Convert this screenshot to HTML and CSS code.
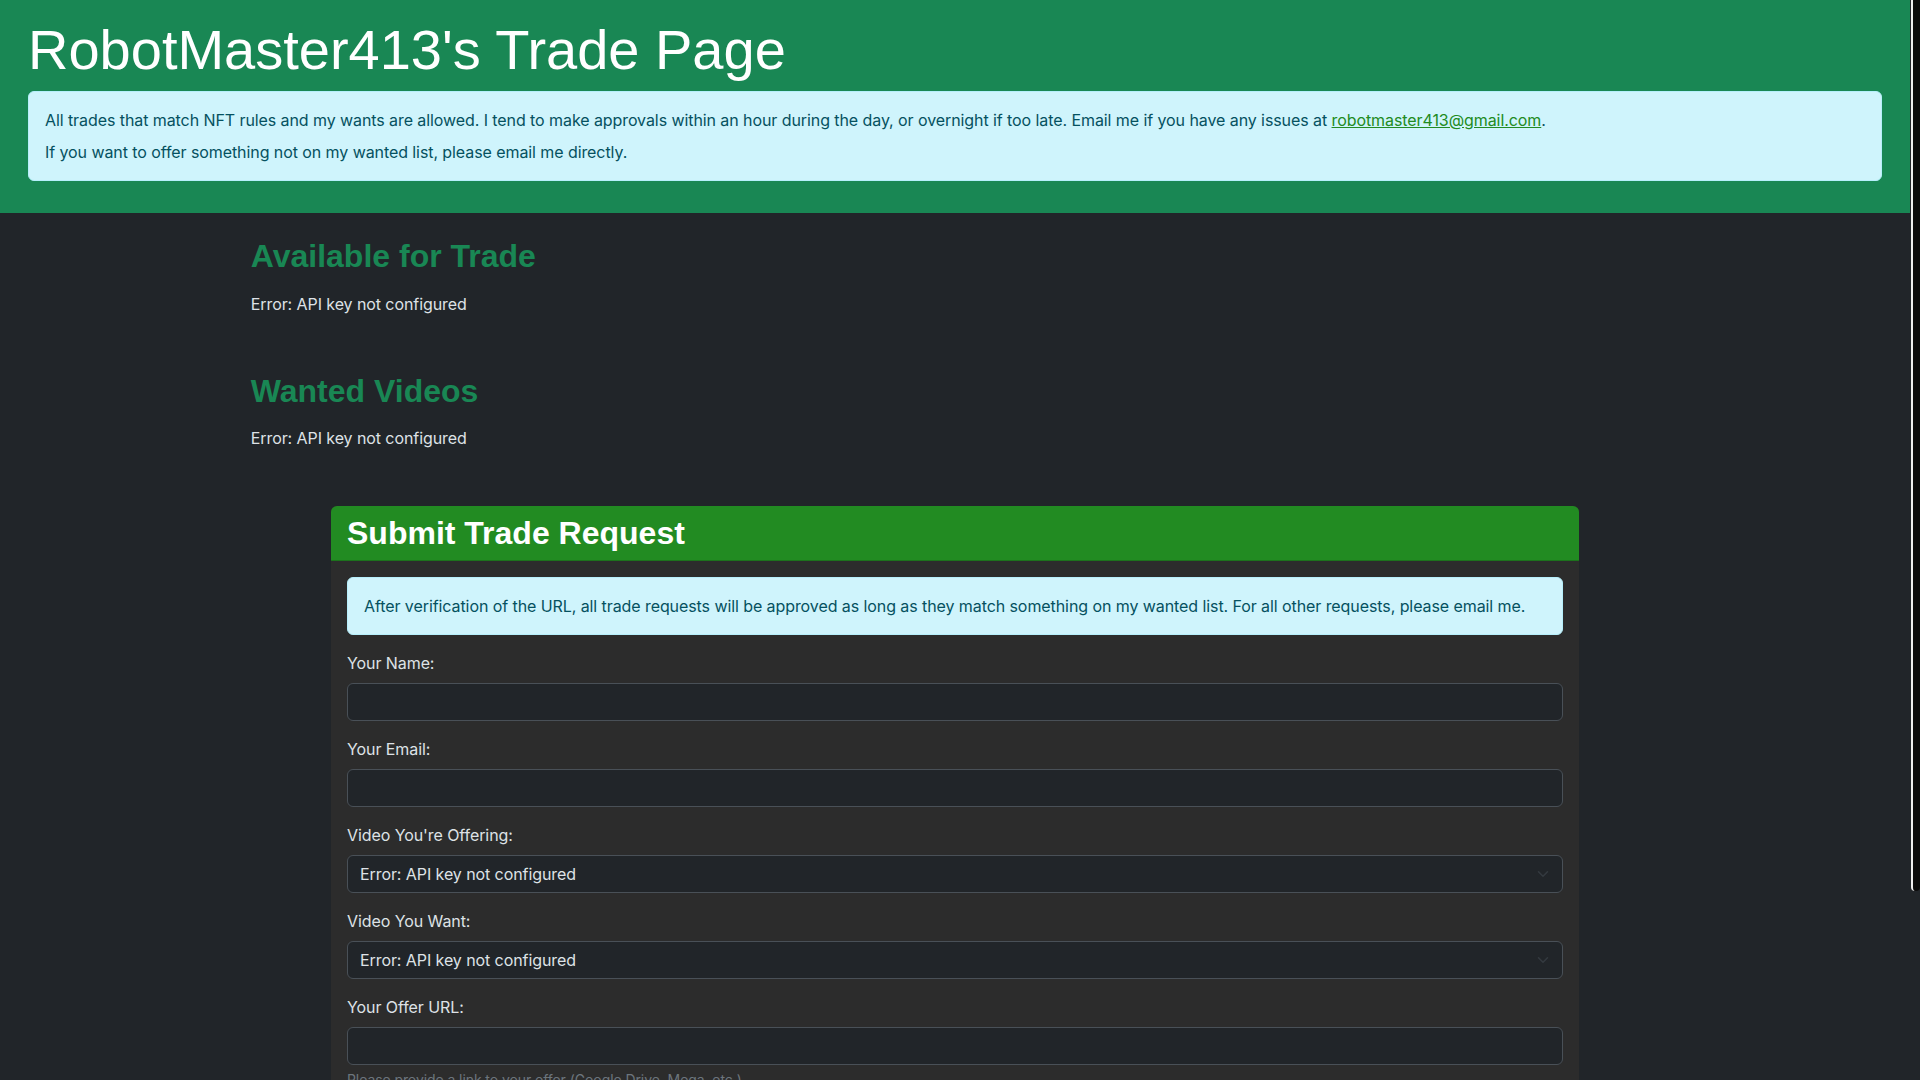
FILE: index.html
```html
<!DOCTYPE html>
<html lang="en">
<head>
<meta charset="utf-8">
<title>RobotMaster413's Trade Page</title>
<link rel="stylesheet" href="styles.css">
</head>
<body>
<div class="page">
<header class="page-header">
  <h1 class="page-title">RobotMaster413's Trade Page</h1>
  <div class="notice">
    <p>All trades that match NFT rules and my wants are allowed. I tend to make approvals within an hour during the day, or overnight if too late. Email me if you have any issues at <a class="mail-link" href="mailto:robotmaster413@gmail.com">robotmaster413@gmail.com</a>.</p>
    <p>If you want to offer something not on my wanted list, please email me directly.</p>
  </div>
</header>

<main class="main">
  <section class="section">
    <h2 class="section-title">Available for Trade</h2>
    <p class="section-text">Error: API key not configured</p>
  </section>

  <section class="section">
    <h2 class="section-title">Wanted Videos</h2>
    <p class="section-text">Error: API key not configured</p>
  </section>

  <div class="trade-card">
    <div class="card-head">
      <h2 class="card-title">Submit Trade Request</h2>
    </div>
    <form class="card-body">
      <div class="info">After verification of the URL, all trade requests will be approved as long as they match something on my wanted list. For all other requests, please email me.</div>

      <div class="field">
        <label class="field-label" for="name">Your Name:</label>
        <input class="control" id="name" type="text">
      </div>

      <div class="field">
        <label class="field-label" for="email">Your Email:</label>
        <input class="control" id="email" type="email">
      </div>

      <div class="field">
        <label class="field-label" for="offer">Video You're Offering:</label>
        <div class="select-wrap">
          <select class="control select" id="offer">
            <option>Error: API key not configured</option>
          </select>
          <svg class="chevron" viewBox="0 0 16 16" width="16" height="12" aria-hidden="true"><path fill="none" stroke="#343a40" stroke-linecap="round" stroke-linejoin="round" stroke-width="2" d="m2 5 6 6 6-6"/></svg>
        </div>
      </div>

      <div class="field">
        <label class="field-label" for="want">Video You Want:</label>
        <div class="select-wrap">
          <select class="control select" id="want">
            <option>Error: API key not configured</option>
          </select>
          <svg class="chevron" viewBox="0 0 16 16" width="16" height="12" aria-hidden="true"><path fill="none" stroke="#343a40" stroke-linecap="round" stroke-linejoin="round" stroke-width="2" d="m2 5 6 6 6-6"/></svg>
        </div>
      </div>

      <div class="field">
        <label class="field-label" for="url">Your Offer URL:</label>
        <input class="control" id="url" type="url">
        <div class="help">Please provide a link to your offer (Google Drive, Mega, etc.)</div>
      </div>

      <div class="field">
        <label class="field-label" for="notes">Additional Notes:</label>
        <textarea class="control textarea" id="notes" rows="3"></textarea>
      </div>

      <button class="submit" type="button">Submit Trade Request</button>
    </form>
  </div>
</main>
</div>
<div class="scrollbar" aria-hidden="true"><div class="scrollbar-thumb"></div></div>
</body>
</html>
```

FILE: styles.css
```css
html {
  background: #212529;
}

body {
  margin: 0;
  background: #212529;
  color: #dee2e6;
  font-family: "Inter", "Noto Sans", sans-serif;
  font-size: 16px;
  line-height: 1.5;
  letter-spacing: -0.08px;
}

.page {
  margin-right: 10px;
}

.scrollbar {
  position: fixed;
  top: 0;
  right: 0;
  width: 10px;
  height: 100vh;
  background: #212529;
}

.scrollbar-thumb {
  box-sizing: border-box;
  height: 891px;
  margin-left: 1px;
  background: #0b0b0b;
  border-left: 2px solid #eeeeee;
  border-radius: 0 0 4px 4px;
}

.page-header {
  background: #198754;
  padding: 16px 28px;
}

.page-title {
  margin: 0 0 8px;
  color: #ffffff;
  font-family: "Liberation Sans", Arial, sans-serif;
  font-size: 56px;
  font-weight: 400;
  line-height: 1.2;
  letter-spacing: 0;
}

.notice {
  background: #cff4fc;
  border: 1px solid #b6effb;
  border-radius: 6px;
  color: #055160;
  padding: 16px;
  margin-bottom: 16px;
}

.notice p {
  margin: 0 0 8px;
}

.notice p:last-child {
  margin-bottom: 0;
}

.mail-link {
  color: #228b22;
  text-decoration: underline;
}

.main {
  box-sizing: border-box;
  width: 75%;
  margin: 0 auto;
  padding: 24px 12px 13px;
}

.section {
  margin-bottom: 56px;
}

.section-title {
  margin: 0 0 16px;
  color: #198754;
  font-family: "Liberation Sans", Arial, sans-serif;
  font-size: 32px;
  font-weight: 700;
  line-height: 1.2;
  letter-spacing: 0;
}

.section-text {
  margin: 0;
}

.trade-card {
  max-width: 1248px;
  margin: 3px auto 0;
  background: #2c2c2c;
  border-radius: 6px;
  overflow: hidden;
}

.card-head {
  background: #228b22;
  padding: 8px 16px;
  border-bottom: 1px solid rgba(0, 0, 0, 0.175);
}

.card-title {
  margin: 0;
  color: #ffffff;
  font-family: "Liberation Sans", Arial, sans-serif;
  font-size: 32px;
  font-weight: 700;
  line-height: 1.2;
  letter-spacing: 0;
}

.card-body {
  padding: 16px;
}

.info {
  background: #cff4fc;
  border: 1px solid #b6effb;
  border-radius: 6px;
  color: #055160;
  padding: 16px;
  margin-bottom: 16px;
}

.field {
  margin-bottom: 16px;
}

.field-label {
  display: block;
  margin-bottom: 8px;
  color: #dee2e6;
}

.control {
  display: block;
  box-sizing: border-box;
  width: 100%;
  height: 38px;
  margin: 0;
  padding: 6px 12px;
  background: #212529;
  border: 1px solid #495057;
  border-radius: 6px;
  color: #dee2e6;
  font-family: "Inter", "Noto Sans", sans-serif;
  font-size: 16px;
  line-height: 1.5;
  letter-spacing: -0.08px;
  outline: none;
}

.select-wrap {
  position: relative;
}

.select {
  -webkit-appearance: none;
  appearance: none;
  padding-right: 36px;
}

.chevron {
  position: absolute;
  right: 12px;
  top: 13px;
  pointer-events: none;
}

.textarea {
  height: 86px;
  resize: none;
}

.help {
  margin-top: 4px;
  color: #6c757d;
  font-size: 14px;
  line-height: 1.5;
}

.submit {
  display: block;
  height: 38px;
  padding: 6px 12px;
  background: #228b22;
  border: 1px solid #228b22;
  border-radius: 6px;
  color: #ffffff;
  font-family: "Inter", "Noto Sans", sans-serif;
  font-size: 16px;
  line-height: 1.5;
}
```
